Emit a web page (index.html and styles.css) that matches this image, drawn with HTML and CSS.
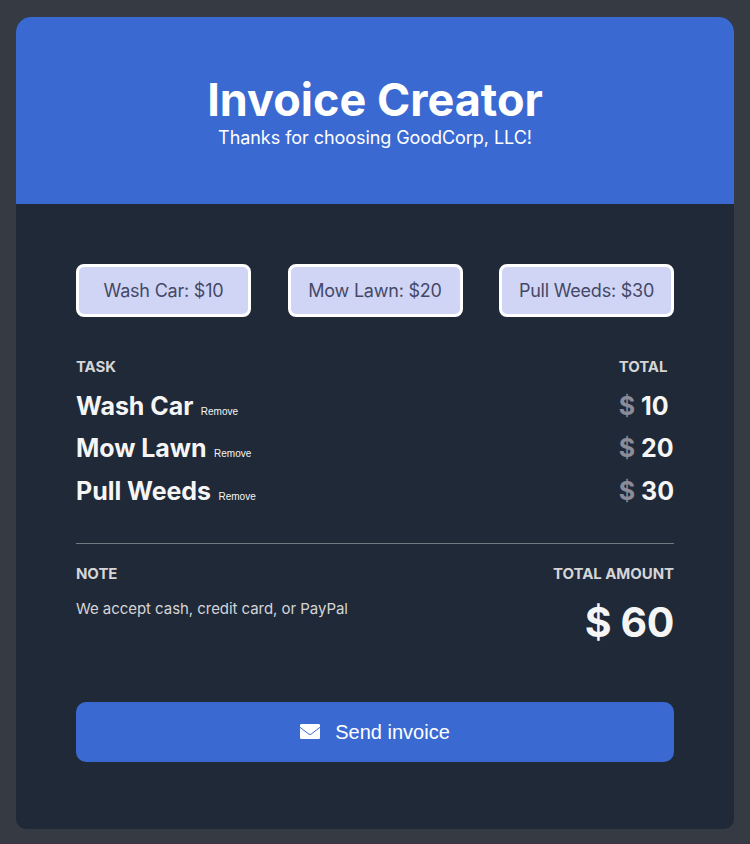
FILE: index.html
```html
<!DOCTYPE html>
<html lang="en">
<head>
<meta charset="utf-8">
<title>Invoice Creator</title>
<link rel="stylesheet" href="styles.css">
</head>
<body>
<main class="card">
  <header class="header">
    <h1>Invoice Creator</h1>
    <p>Thanks for choosing GoodCorp, LLC!</p>
  </header>
  <section class="content">
    <div class="services">
      <button class="service">Wash Car: $10</button>
      <button class="service">Mow Lawn: $20</button>
      <button class="service">Pull Weeds: $30</button>
    </div>
    <div class="invoice">
      <div class="tasks">
        <h2>TASK</h2>
        <p class="item">Wash Car<button class="remove">Remove</button></p>
        <p class="item">Mow Lawn<button class="remove">Remove</button></p>
        <p class="item">Pull Weeds<button class="remove">Remove</button></p>
      </div>
      <div class="prices">
        <h2>TOTAL</h2>
        <p class="item"><span class="currency">$</span> 10</p>
        <p class="item"><span class="currency">$</span> 20</p>
        <p class="item"><span class="currency">$</span> 30</p>
      </div>
    </div>
    <div class="summary">
      <div>
        <h2>NOTE</h2>
        <p class="note">We accept cash, credit card, or PayPal</p>
      </div>
      <div class="amount">
        <h2>TOTAL AMOUNT</h2>
        <p class="sum">$ 60</p>
      </div>
    </div>
    <button class="send">
      <svg class="mail" viewBox="0 0 20 15" aria-hidden="true"><rect width="20" height="15" rx="1.2"/><path d="M0 3.300L8.700 10Q10 11 11.300 10L20 3.300"/></svg>
      <span>Send invoice</span>
    </button>
  </section>
</main>
</body>
</html>
```
FILE: styles.css
```css
* { box-sizing: border-box; }
body {
  margin: 0;
  padding: 17px 16px 14px;
  height: 844px;
  border-bottom: 1px solid #3b333d;
  background: #363a42;
  color: #f5f5f5;
  font-family: Inter, sans-serif;
}
h1, h2, p { margin: 0; }
button { font-family: inherit; }
.card {
  height: 812px;
  border-radius: 15px 15px 10px 10px;
  overflow: hidden;
  background: #202937;
}
.header {
  height: 187px;
  padding-top: 56px;
  background: #3a69d2;
  color: #fff;
  text-align: center;
}
h1 { font-size: 45px; line-height: 54px; }
.header p { font-size: 18px; line-height: 22px; letter-spacing: -0.06px; }
.content { padding: 60px; }
.services { display: flex; justify-content: space-between; }
.service {
  width: 175px;
  height: 53px;
  padding: 0;
  border: 3px solid #fff;
  border-radius: 8px;
  background: #d1d5f5;
  color: #444968;
  font-size: 18px;
  letter-spacing: -0.22px;
}
.invoice {
  display: flex;
  justify-content: space-between;
  height: 227px;
  padding-top: 40px;
  border-bottom: 1px solid #737982;
}
h2 { color: #d5d5d8; font-size: 15px; line-height: 20px; letter-spacing: -0.06px; }
.invoice h2 { margin-bottom: 8px; }
.item { height: 42.4px; font-size: 25px; line-height: 42px; font-weight: 700; white-space: nowrap; }
.tasks .item { letter-spacing: -0.05px; }
.remove {
  margin-left: 7.5px;
  padding: 0;
  border: 0;
  background: none;
  color: #f5f5f5;
  font: 10px "Liberation Sans", Arial, sans-serif;
}
.currency { color: #8c8b98; }
.summary { display: flex; justify-content: space-between; height: 158px; padding-top: 20px; }
.note { margin-top: 15px; color: #d5d5d8; font-size: 15px; line-height: 20px; letter-spacing: -0.05px; }
.amount { text-align: right; }
.sum { margin-top: 13px; font-size: 41px; line-height: 50px; font-weight: 700; letter-spacing: -0.4px; }
.send {
  display: flex;
  align-items: center;
  justify-content: center;
  gap: 15px;
  width: 100%;
  height: 60px;
  border: 0;
  border-radius: 10px;
  background: #3a69d2;
  color: #fff;
  font-family: "Liberation Sans", Arial, sans-serif;
  font-size: 20px;
}
.mail { width: 20px; height: 15px; margin-bottom: 1px; fill: currentColor; }
.mail path { fill: none; stroke: #3a69d2; stroke-width: 1; }
```
